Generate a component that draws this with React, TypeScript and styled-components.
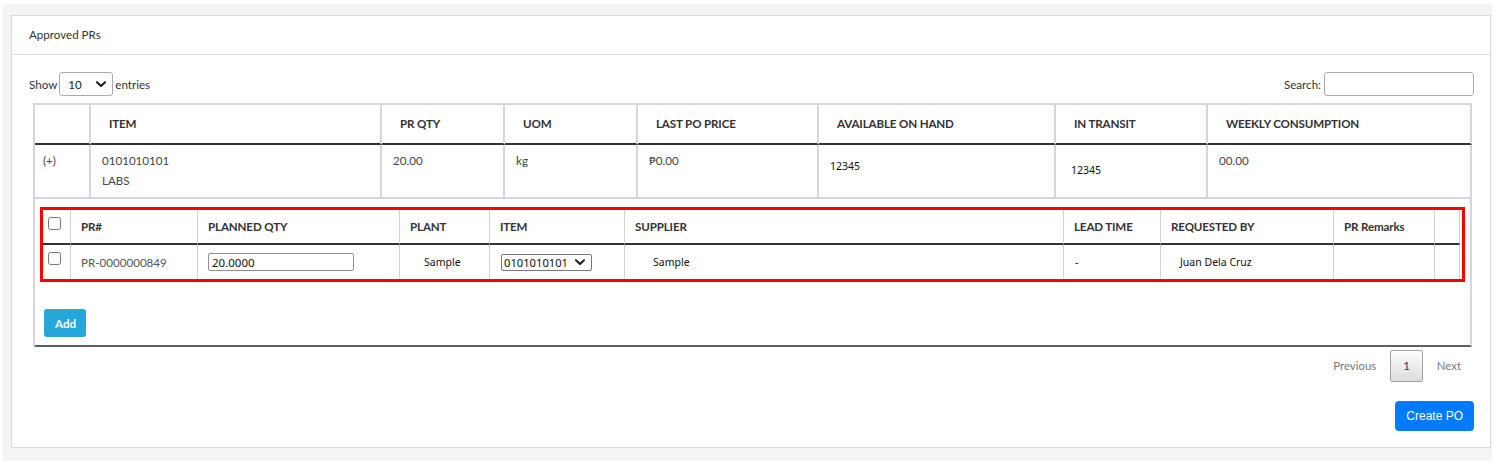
import React from "react";
import styled, { createGlobalStyle } from "styled-components";

const GlobalStyle = createGlobalStyle`
  html, body { margin: 0; padding: 0; background: #fff; }
  body { font-family: Lato, "Noto Sans", sans-serif; color: #333; }
  * { box-sizing: border-box; }
`;

const Page = styled.div`
  margin: 4px 3px 1px 3px;
  padding: 11px 1px 13px 8px;
  background: #f4f4f4;
`;

const Card = styled.section`
  background: #fff;
  border: 1px solid #dadada;
`;

const CardHeader = styled.header`
  height: 39px;
  display: flex;
  align-items: center;
  padding: 0 17px 2px;
  border-bottom: 1px solid #dedede;
  font-size: 11.6px;
  color: #333;
`;

const CardBody = styled.div`
  padding: 17px 16px 16px 17px;
`;

const Controls = styled.div`
  display: flex;
  justify-content: space-between;
  align-items: center;
  height: 24px;
  margin-bottom: 7px;
  font-size: 11.6px;
  color: #333;
`;

const Label = styled.label`
  display: flex;
  align-items: center;
  gap: 2px;
`;

const LengthSelect = styled.div`
  display: inline-flex;
  align-items: center;
  justify-content: space-between;
  width: 54px;
  height: 24px;
  padding: 0 6px 0 8px;
  border: 1px solid #aaa;
  border-radius: 3px;
  font-size: 11.6px;
  color: #222;
  background: #fff;
`;

const SearchInput = styled.input`
  width: 150px;
  height: 24px;
  margin-left: 1px;
  border: 1px solid #aaa;
  border-radius: 3px;
  background: #fff;
`;

const DataTable = styled.table`
  table-layout: fixed;
  width: 1439px;
  margin-left: 4px;
  border-collapse: separate;
  border-spacing: 0;
  border-left: 2px solid #d3d7db;
  border-top: 2px solid #d3d7db;
`;

const HeadCell = styled.th<{ $w: number }>`
  width: ${(p) => p.$w}px;
  padding: 10px 8px 10px 18px;
  line-height: 18px;
  text-align: left;
  font-weight: 700;
  font-size: 11.6px;
  letter-spacing: -0.15px;
  color: #333;
  border-right: 2px solid #d3d7db;
  border-bottom: 2px solid #333;
`;

const BodyCell = styled.td<{ $pad?: number }>`
  padding: 6px 10px 6px ${(p) => p.$pad ?? 11}px;
  line-height: 20px;
  vertical-align: top;
  font-size: 11.6px;
  color: #444;
  border-right: 2px solid #d3d7db;
  border-bottom: 2px solid #d3d7db;
`;

const RawText = styled.span<{ $top: number }>`
  display: block;
  margin-top: ${(p) => p.$top}px;
  font-family: "Noto Sans", sans-serif;
  font-size: 10.5px;
  color: #111;
`;

const NestedCell = styled.td`
  padding: 8px 0 8px 5px;
  border-right: 2px solid #d3d7db;
  border-bottom: 2px solid #5b6064;
`;

const Highlight = styled.div`
  width: 1425px;
  border: 3px solid #ff0000;
  padding-right: 2px;
`;

const SubTable = styled.table`
  table-layout: fixed;
  width: 1417px;
  border-collapse: separate;
  border-spacing: 0;
`;

const SubHead = styled.th<{ $w: number; $center?: boolean }>`
  width: ${(p) => p.$w}px;
  height: 35px;
  padding: 0 4px 0 ${(p) => (p.$center ? 0 : 10)}px;
  text-align: ${(p) => (p.$center ? "center" : "left")};
  font-weight: 700;
  font-size: 11.6px;
  letter-spacing: -0.15px;
  color: #333;
  border-right: 1px solid #cfd3d7;
  border-bottom: 2px solid #333;
`;

const SubCell = styled.td<{ $pad?: number; $center?: boolean }>`
  height: 34px;
  padding: 0 4px 0 ${(p) => p.$pad ?? 10}px;
  text-align: ${(p) => (p.$center ? "center" : "left")};
  font-size: 11.6px;
  color: #555;
  border-right: 1px solid #cfd3d7;
`;

const PlainText = styled.span`
  font-family: "Noto Sans", sans-serif;
  font-size: 10.5px;
  color: #111;
`;

const Check = styled.input.attrs({ type: "checkbox" })<{ $lift: number }>`
  margin: 0;
  width: 13px;
  height: 13px;
  position: relative;
  top: ${(p) => -p.$lift}px;
  vertical-align: middle;
`;

const QtyInput = styled.input`
  width: 146px;
  height: 18px;
  padding: 0 3px;
  border: 1px solid #8f8f8f;
  border-radius: 2px;
  font-family: "Noto Sans", sans-serif;
  font-size: 11.5px;
  color: #111;
  vertical-align: middle;
`;

const ItemSelect = styled.div`
  display: inline-flex;
  align-items: center;
  justify-content: space-between;
  width: 91px;
  height: 17px;
  padding: 0 6px 0 2px;
  border: 1px solid #767676;
  border-radius: 2px;
  font-family: "Noto Sans", sans-serif;
  font-size: 11.2px;
  color: #111;
  vertical-align: middle;
`;

const AddButton = styled.button`
  display: block;
  margin-top: 27px;
  margin-left: 4px;
  height: 28px;
  padding: 0 10px 0 11px;
  border: none;
  border-radius: 3px;
  background: #25a7da;
  color: #fff;
  font-family: Lato, sans-serif;
  font-weight: 700;
  font-size: 11.6px;
`;

const Pagination = styled.nav`
  display: flex;
  justify-content: flex-end;
  gap: 1px;
  margin-top: 3px;
`;

const PageLink = styled.span<{ $active?: boolean }>`
  padding: 6px 12px;
  line-height: 18px;
  font-size: 11.4px;
  color: ${(p) => (p.$active ? "#333" : "#777")};
  border: 1px solid ${(p) => (p.$active ? "#a3a3a3" : "transparent")};
  border-radius: 2px;
  background: ${(p) => (p.$active ? "linear-gradient(#fdfdfd, #dcdcdc)" : "transparent")};
`;

const Actions = styled.div`
  display: flex;
  justify-content: flex-end;
  margin-top: 19px;
`;

const PrimaryButton = styled.button`
  height: 30px;
  padding: 0 11px;
  border: none;
  border-radius: 4px;
  background: #007bff;
  color: #fff;
  font-family: "Liberation Sans", Arial, sans-serif;
  font-size: 12px;
`;

const Chevron = () => (
  <svg width="10" height="7" viewBox="0 0 10 7" aria-hidden="true">
    <path d="M1 1.2 L5 5 L9 1.2" fill="none" stroke="#1a1a1a" strokeWidth="2" strokeLinecap="round" strokeLinejoin="round" />
  </svg>
);

const outerCols: [string, number][] = [
  ["", 56],
  ["ITEM", 291],
  ["PR QTY", 123],
  ["UOM", 133],
  ["LAST PO PRICE", 181],
  ["AVAILABLE ON HAND", 237],
  ["IN TRANSIT", 152],
  ["WEEKLY CONSUMPTION", 264],
];

const innerCols: [string, number][] = [
  ["", 28],
  ["PR#", 127],
  ["PLANNED QTY", 202],
  ["PLANT", 90],
  ["ITEM", 135],
  ["SUPPLIER", 439],
  ["LEAD TIME", 97],
  ["REQUESTED BY", 173],
  ["PR Remarks", 101],
  ["", 25],
];

export default function App() {
  return (
    <>
      <GlobalStyle />
      <Page>
        <Card>
          <CardHeader>Approved PRs</CardHeader>
          <CardBody>
            <Controls>
              <Label>
                Show
                <LengthSelect>
                  10
                  <Chevron />
                </LengthSelect>
                entries
              </Label>
              <Label>
                Search:
                <SearchInput type="search" />
              </Label>
            </Controls>

            <DataTable>
              <thead>
                <tr>
                  {outerCols.map(([t, w], i) => (
                    <HeadCell key={i} $w={w}>
                      {t}
                    </HeadCell>
                  ))}
                </tr>
              </thead>
              <tbody>
                <tr>
                  <BodyCell $pad={8}>(+)</BodyCell>
                  <BodyCell>
                    0101010101
                    <br />
                    LABS
                  </BodyCell>
                  <BodyCell>20.00</BodyCell>
                  <BodyCell>kg</BodyCell>
                  <BodyCell>₱0.00</BodyCell>
                  <BodyCell>
                    <RawText $top={5}>12345</RawText>
                  </BodyCell>
                  <BodyCell $pad={15}>
                    <RawText $top={9}>12345</RawText>
                  </BodyCell>
                  <BodyCell>00.00</BodyCell>
                </tr>
                <tr>
                  <NestedCell colSpan={8}>
                    <Highlight>
                      <SubTable>
                        <thead>
                          <tr>
                            {innerCols.map(([t, w], i) => (
                              <SubHead key={i} $w={w} $center={i === 0}>
                                {i === 0 ? <Check $lift={4} readOnly /> : t}
                              </SubHead>
                            ))}
                          </tr>
                        </thead>
                        <tbody>
                          <tr>
                            <SubCell $center $pad={0}>
                              <Check $lift={4} readOnly />
                            </SubCell>
                            <SubCell>PR-0000000849</SubCell>
                            <SubCell>
                              <QtyInput defaultValue="20.0000" />
                            </SubCell>
                            <SubCell $pad={24}>
                              <PlainText>Sample</PlainText>
                            </SubCell>
                            <SubCell $pad={11}>
                              <ItemSelect>
                                0101010101
                                <Chevron />
                              </ItemSelect>
                            </SubCell>
                            <SubCell $pad={28}>
                              <PlainText>Sample</PlainText>
                            </SubCell>
                            <SubCell $pad={11}>
                              <PlainText>-</PlainText>
                            </SubCell>
                            <SubCell $pad={19}>
                              <PlainText>Juan Dela Cruz</PlainText>
                            </SubCell>
                            <SubCell />
                            <SubCell />
                          </tr>
                        </tbody>
                      </SubTable>
                    </Highlight>
                    <AddButton>Add</AddButton>
                  </NestedCell>
                </tr>
              </tbody>
            </DataTable>

            <Pagination>
              <PageLink>Previous</PageLink>
              <PageLink $active>1</PageLink>
              <PageLink>Next</PageLink>
            </Pagination>

            <Actions>
              <PrimaryButton>Create PO</PrimaryButton>
            </Actions>
          </CardBody>
        </Card>
      </Page>
    </>
  );
}
